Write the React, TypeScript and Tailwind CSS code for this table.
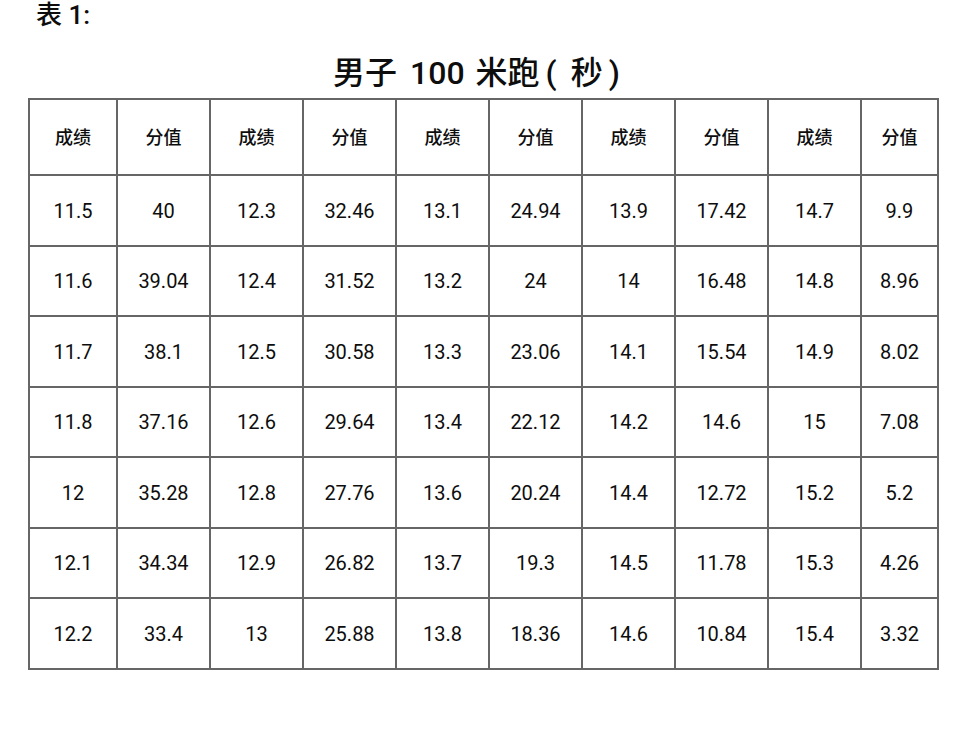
import React from "react";

const rows: string[][] = [
  ["11.5", "40", "12.3", "32.46", "13.1", "24.94", "13.9", "17.42", "14.7", "9.9"],
  ["11.6", "39.04", "12.4", "31.52", "13.2", "24", "14", "16.48", "14.8", "8.96"],
  ["11.7", "38.1", "12.5", "30.58", "13.3", "23.06", "14.1", "15.54", "14.9", "8.02"],
  ["11.8", "37.16", "12.6", "29.64", "13.4", "22.12", "14.2", "14.6", "15", "7.08"],
  ["12", "35.28", "12.8", "27.76", "13.6", "20.24", "14.4", "12.72", "15.2", "5.2"],
  ["12.1", "34.34", "12.9", "26.82", "13.7", "19.3", "14.5", "11.78", "15.3", "4.26"],
  ["12.2", "33.4", "13", "25.88", "13.8", "18.36", "14.6", "10.84", "15.4", "3.32"],
];

const heights = ["h-[71px]", "h-[70px]", "h-[71px]", "h-[70px]", "h-[71px]", "h-[70px]", "h-[71px]"];

const headers = ["成绩", "分值", "成绩", "分值", "成绩", "分值", "成绩", "分值", "成绩", "分值"];

export default function App() {
  return (
    <div
      className="w-[959px] h-[741px] bg-white text-[#0d0d0d]"
      style={{ fontFamily: 'Roboto, "Noto Sans CJK SC", sans-serif' }}
    >
      <div className="h-[30px] pl-[36px] text-[26px] leading-[30px] font-medium">表 1:</div>
      <div className="mt-[24px] h-[38px] leading-[38px] text-[32px] font-medium flex justify-start pl-[333px] whitespace-pre">
        <span>男子</span>
        <span className="ml-[13px]">100</span>
        <span className="ml-[11px]">米跑</span>
        <span className="ml-[6px]">(</span>
        <span className="ml-[14px]">秒</span>
        <span className="ml-[6px]">)</span>
      </div>
      <div className="mt-[6px] pl-[28px]">
        <div className="grid grid-cols-[88px_repeat(8,93px)_77px] w-max border-l-2 border-t-2 border-[#666]">
          {headers.map((h, i) => (
            <div
              key={"h" + i}
              className="h-[76px] border-r-2 border-b-2 border-[#666] flex items-center justify-center text-[18px] font-medium"
            >
              {h}
            </div>
          ))}
          {rows.map((r, ri) =>
            r.map((c, ci) => (
              <div
                key={ri + "-" + ci}
                className={`${heights[ri]} border-r-2 border-b-2 border-[#666] flex items-center justify-center text-[20px] font-normal`}
              >
                {c}
              </div>
            ))
          )}
        </div>
      </div>
    </div>
  );
}
